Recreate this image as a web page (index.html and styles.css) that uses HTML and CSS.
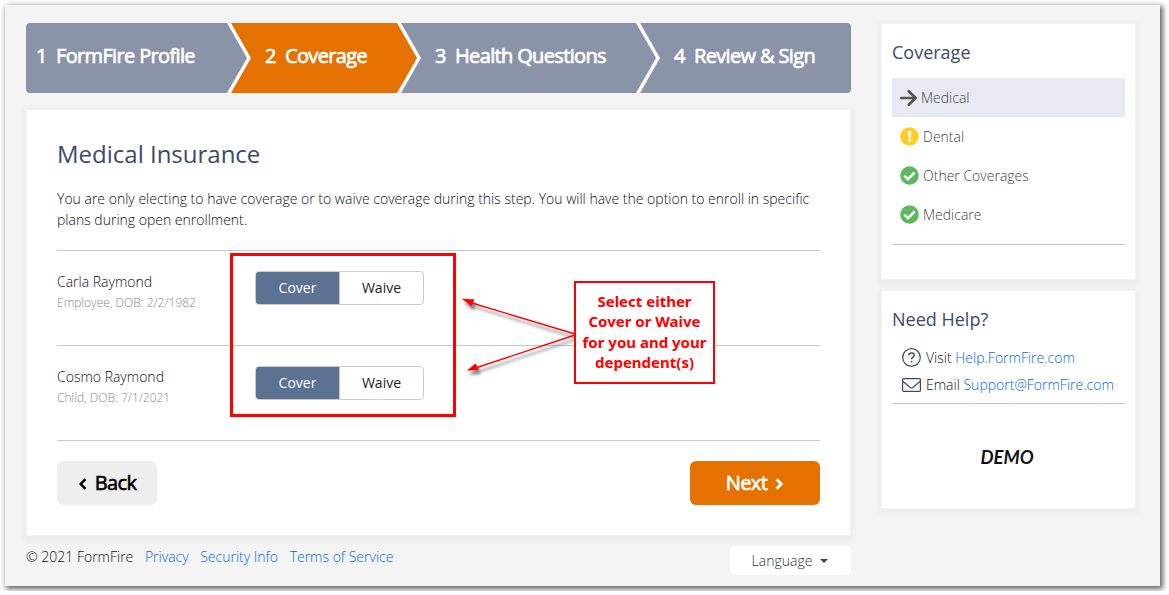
FILE: index.html
```html
<!DOCTYPE html>
<html lang="en">
  <head>
    <meta charset="UTF-8" />
    <meta name="viewport" content="width=device-width, initial-scale=1.0" />
    <title>FormFire - Medical Insurance</title>
    <link rel="stylesheet" href="styles.css">
  </head>
  <body>
    <div class="page">
      <div class="main">
        <div class="steps">
          <div class="step first"><span class="num">1</span><span>FormFire Profile</span></div>
          <div class="step second active"><span class="num">2</span><span>Coverage</span></div>
          <div class="step third"><span class="num">3</span><span>Health Questions</span></div>
          <div class="step last"><span class="num">4</span><span>Review &amp; Sign</span></div>
        </div>

        <div class="card content">
          <h1>Medical Insurance</h1>
          <p class="intro">You are only electing to have coverage or to waive coverage during this step. You will have the option to enroll in specific plans during open enrollment.</p>
          <div class="person">
            <div class="info">
              <div class="name">Carla Raymond</div>
              <div class="detail">Employee, DOB: 2/2/1982</div>
            </div>
            <div class="toggle">
              <div class="option selected">Cover</div>
              <div class="option">Waive</div>
            </div>
          </div>
          <div class="person">
            <div class="info">
              <div class="name">Cosmo Raymond</div>
              <div class="detail">Child, DOB: 7/1/2021</div>
            </div>
            <div class="toggle">
              <div class="option selected">Cover</div>
              <div class="option">Waive</div>
            </div>
          </div>
          <div class="actions">
            <div class="btn back">
              <svg width="9" height="12" viewBox="0 0 9 12"><path d="M7.500 1.200 2.700 6l4.800 4.800" fill="none" stroke="#000" stroke-width="2.400"/></svg>
              <span>Back</span>
            </div>
            <div class="btn next">
              <span>Next</span>
              <svg width="9" height="12" viewBox="0 0 9 12"><path d="M1.500 1.200 6.300 6l-4.800 4.800" fill="none" stroke="#fff" stroke-width="3"/></svg>
            </div>
          </div>

          <div class="highlight"></div>
          <svg class="arrows" width="116" height="84" viewBox="0 0 116 84">
            <g fill="#f00" stroke="#f00">
              <path d="M115 38 12 7M115 39 17 71.500" fill="none" stroke-width="1.400"/>
              <path d="M2.500 3 14 3.500 11.500 10zM7.500 74.300 15.500 67.800 18.500 73.800z" stroke-width=".6"/>
            </g>
          </svg>
          <div class="callout">Select either<br />Cover or Waive<br />for you and your<br />dependent(s)</div>
        </div>

        <div class="footer">
          <div class="links">
            <span class="copy">© 2021 FormFire</span>
            <a href="#">Privacy</a>
            <a href="#">Security Info</a>
            <a href="#">Terms of Service</a>
          </div>
          <div class="language"><span>Language</span><i class="caret"></i></div>
        </div>
      </div>

      <div class="side">
        <div class="card coverage">
          <h2>Coverage</h2>
          <ul class="menu">
            <li class="current">
              <svg width="17" height="18" viewBox="0 0 17 18"><path d="M1.200 9h14M8.800 2.200 15.600 9l-6.800 6.800" fill="none" stroke="#555" stroke-width="2.700" stroke-linecap="round" stroke-linejoin="round"/></svg>
              <span>Medical</span>
            </li>
            <li>
              <svg width="19" height="19" viewBox="0 0 19 19"><circle cx="9.500" cy="9.500" r="9.300" fill="#ffcd24"/><path d="M7.700 4.300h3.600l-.5 6.400H8.200z" fill="#fff"/><circle cx="9.500" cy="13.400" r="1.700" fill="#fff"/></svg>
              <span>Dental</span>
            </li>
            <li>
              <svg width="19" height="19" viewBox="0 0 19 19"><circle cx="9.500" cy="9.500" r="9.300" fill="#5cb85c"/><path d="m4.300 9.600 3.600 3.600 6.700-6.700" fill="none" stroke="#fff" stroke-width="2.600"/></svg>
              <span>Other Coverages</span>
            </li>
            <li>
              <svg width="19" height="19" viewBox="0 0 19 19"><circle cx="9.500" cy="9.500" r="9.300" fill="#5cb85c"/><path d="m4.300 9.600 3.600 3.600 6.700-6.700" fill="none" stroke="#fff" stroke-width="2.600"/></svg>
              <span>Medicare</span>
            </li>
          </ul>
        </div>

        <div class="card help">
          <h2>Need Help?</h2>
          <div class="contact">
            <div class="row">
              <svg width="19" height="19" viewBox="0 0 19 19" fill="none" stroke="#3b4a6b"><circle cx="9.500" cy="9.500" r="8.800" stroke-width="1.200"/><path d="M6.700 7.200C6.800 5.600 8 4.900 9.500 4.900s2.800.8 2.800 2.200c0 2-2.700 2.100-2.700 4.200" stroke-width="1.500"/><path d="M9.600 12.800v1.600" stroke-width="1.600"/></svg>
              <span>Visit <a href="#">Help.FormFire.com</a></span>
            </div>
            <div class="row">
              <svg width="19" height="14" viewBox="0 0 19 14" fill="none" stroke="#3b4a6b" stroke-width="1.200"><rect x=".6" y=".6" width="17.800" height="12.800" rx="1"/><path d="m.8 3.300 7.400 6.200q1.300 1 2.600 0l7.400-6.200"/></svg>
              <span>Email <a href="#">Support@FormFire.com</a></span>
            </div>
          </div>
          <div class="demo">DEMO</div>
        </div>
      </div>
    </div>
  </body>
</html>
```
FILE: styles.css
```css
* {
  padding: 0;
  margin: 0;
  box-sizing: border-box;
}
body {
  padding: 5px;
  background: #fff;
  color: #111;
  font: 300 14px/21px 'Open Sans', sans-serif;
}
a {
  color: #0068f0;
  text-decoration: none;
}
.page {
  width: 1155px;
  height: 581px;
  padding: 18px 24px 0 21px;
  display: flex;
  justify-content: space-between;
  background: #f4f4f4;
  box-shadow: 2px 2px 5px 1px rgba(0, 0, 0, 0.6);
}
.main {
  width: 825px;
}
.card {
  background: #fff;
  border: 1px solid #f3f3f3;
  box-shadow: 0 2px 5px 3px rgba(0, 0, 0, 0.03);
}

/* progress steps */
.steps {
  height: 70px;
  display: flex;
  background: #fff;
  border-radius: 4px;
  overflow: hidden;
}
.step {
  height: 70px;
  display: flex;
  padding: 0 0 5px 34px;
  align-items: center;
  background: #8b93a9;
  color: #fff;
  font-size: 20px;
  font-weight: 400;
  letter-spacing: -0.65px;
  white-space: nowrap;
  -webkit-text-stroke: 0.7px #fff;
  clip-path: polygon(0 0, calc(100% - 20px) 0, 100% 50%, calc(100% - 20px) 100%, 0 100%, 20px 50%);
}
.step + .step {
  margin-left: -16px;
}
.step .num {
  width: 20px;
}
.first {
  width: 221px;
  padding-left: 10px;
  clip-path: polygon(0 0, calc(100% - 20px) 0, 100% 50%, calc(100% - 20px) 100%, 0 100%);
}
.second {
  width: 186px;
}
.third {
  width: 255px;
}
.last {
  width: 211px;
  clip-path: polygon(0 0, 100% 0, 100% 100%, 0 100%, 20px 50%);
}
.step.active {
  background: #e57200;
}

/* coverage form */
.content {
  position: relative;
  height: 427px;
  margin-top: 16px;
  padding: 28px 30px 0;
}
h1 {
  color: #3b4a6b;
  font-size: 24px;
  font-weight: 400;
  line-height: 32px;
}
.intro {
  height: 62px;
  margin-top: 18px;
}
.person {
  height: 95px;
  padding-top: 20px;
  display: flex;
  border-top: 1px solid #c8c8c8;
}
.info {
  width: 198px;
}
.detail {
  color: #888;
  font-size: 12px;
}
.toggle {
  width: 169px;
  height: 34px;
  display: flex;
  border: 1px solid #ccc;
  border-radius: 4px;
  overflow: hidden;
  font-weight: 400;
  line-height: 32px;
  text-align: center;
}
.option {
  width: 84px;
  border-left: 1px solid #ccc;
  color: #222;
}
.option.selected {
  width: 83px;
  border-left: 0;
  background: #5b7292;
  color: #fff;
}
.actions {
  padding-top: 20px;
  display: flex;
  justify-content: space-between;
  border-top: 1px solid #c8c8c8;
}
.btn {
  height: 44px;
  padding-bottom: 2px;
  display: flex;
  align-items: center;
  justify-content: center;
  gap: 8px;
  border-radius: 6px;
  font-size: 20px;
  font-weight: 400;
  letter-spacing: -0.6px;
}
.btn svg {
  margin-top: 4px;
}
.back {
  width: 100px;
  background: #eee;
  color: #000;
  -webkit-text-stroke: 0.6px #000;
}
.next {
  width: 130px;
  background: #e57200;
  color: #fff;
  -webkit-text-stroke: 0.7px #fff;
}

/* annotation over the form */
.highlight {
  position: absolute;
  left: 203px;
  top: 143px;
  width: 226px;
  height: 164px;
  border: 3px solid #f00;
}
.arrows {
  position: absolute;
  left: 433px;
  top: 186px;
  filter: drop-shadow(2px 4px 1.5px rgba(0, 0, 0, 0.5));
}
.callout {
  position: absolute;
  left: 547px;
  top: 171px;
  width: 141px;
  height: 103px;
  padding-top: 8px;
  background: #fff;
  border: 2px solid #f00;
  color: #f00;
  font-family: 'Noto Sans', sans-serif;
  font-size: 15px;
  font-weight: 700;
  line-height: 20.4px;
  text-align: center;
  white-space: nowrap;
}

.footer {
  display: flex;
  justify-content: space-between;
  padding-top: 10px;
}
.links {
  display: flex;
  gap: 11.6px;
}
.language {
  width: 121px;
  height: 29px;
  padding-right: 1px;
  display: flex;
  align-items: center;
  justify-content: center;
  gap: 8px;
  background: #fff;
  border-radius: 5px;
  color: #333;
}
.caret {
  border: 4px solid transparent;
  border-top-color: #444;
  border-bottom: 0;
}

/* right column */
.side {
  width: 255px;
}
.side .card {
  padding: 13px 10px 0;
}
.coverage {
  height: 257px;
}
h2 {
  color: #3b4a6b;
  font-size: 18px;
  font-weight: 400;
  line-height: 30px;
}
.menu {
  margin-top: 11px;
  height: 167px;
  list-style: none;
  border-bottom: 1px solid #c8c8c8;
}
.menu li {
  height: 39px;
  padding-left: 8px;
  display: flex;
  align-items: center;
  gap: 4px;
  color: #444;
}
.menu .current {
  background: #e7eaf2;
}
.help {
  height: 219px;
  margin-top: 10px;
}
.contact {
  height: 70px;
  padding: 10px 0 0 10px;
  border-bottom: 1px solid #c8c8c8;
}
.row {
  height: 27px;
  display: flex;
  align-items: center;
  gap: 5px;
}
.demo {
  margin-top: 43px;
  padding-right: 3px;
  color: #111;
  font-size: 18.5px;
  font-weight: 700;
  font-style: italic;
  font-family: Lato, sans-serif;
  text-align: center;
}
```
